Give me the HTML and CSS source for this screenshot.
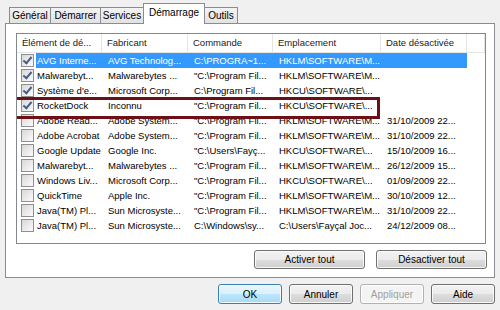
FILE: index.html
```html
<!DOCTYPE html>
<html lang="fr">
<head>
    <meta charset="UTF-8">
    <title>Configuration du système</title>
    <link rel="stylesheet" href="styles.css">
</head>
<body>
    <div class="dialog">
        <div class="tabs">
            <div class="tab t-general">Général</div>
            <div class="tab t-demarrer">Démarrer</div>
            <div class="tab t-services">Services</div>
            <div class="tab t-demarrage active">Démarrage</div>
            <div class="tab t-outils">Outils</div>
        </div>

        <div class="panel">
            <div class="list">
                <div class="list-header">
                    <div class="col">Élément de dé...</div>
                    <div class="col">Fabricant</div>
                    <div class="col">Commande</div>
                    <div class="col">Emplacement</div>
                    <div class="col">Date désactivée</div>
                    <div class="col"></div>
                </div>

                <div class="row selected">
                    <div class="cell first"><span class="check on"></span><span class="label">AVG Interne...</span></div>
                    <div class="cell">AVG Technolog...</div>
                    <div class="cell">C:\PROGRA~1...</div>
                    <div class="cell">HKLM\SOFTWARE\M...</div>
                    <div class="cell"></div>
                </div>
                <div class="row">
                    <div class="cell first"><span class="check on"></span><span class="label">Malwarebyt...</span></div>
                    <div class="cell">Malwarebytes ...</div>
                    <div class="cell">"C:\Program Fil...</div>
                    <div class="cell">HKLM\SOFTWARE\M...</div>
                    <div class="cell"></div>
                </div>
                <div class="row">
                    <div class="cell first"><span class="check on"></span><span class="label">Système d'e...</span></div>
                    <div class="cell">Microsoft Corp...</div>
                    <div class="cell">C:\Program Fil...</div>
                    <div class="cell">HKCU\SOFTWARE\...</div>
                    <div class="cell"></div>
                </div>
                <div class="row">
                    <div class="cell first"><span class="check on"></span><span class="label">RocketDock</span></div>
                    <div class="cell">Inconnu</div>
                    <div class="cell">"C:\Program Fil...</div>
                    <div class="cell">HKCU\SOFTWARE\...</div>
                    <div class="cell"></div>
                </div>
                <div class="row">
                    <div class="cell first"><span class="check"></span><span class="label">Adobe Read...</span></div>
                    <div class="cell">Adobe System...</div>
                    <div class="cell">"C:\Program Fil...</div>
                    <div class="cell">HKLM\SOFTWARE\M...</div>
                    <div class="cell">31/10/2009 22...</div>
                </div>
                <div class="row">
                    <div class="cell first"><span class="check"></span><span class="label">Adobe Acrobat</span></div>
                    <div class="cell">Adobe System...</div>
                    <div class="cell">"C:\Program Fil...</div>
                    <div class="cell">HKLM\SOFTWARE\M...</div>
                    <div class="cell">31/10/2009 22...</div>
                </div>
                <div class="row">
                    <div class="cell first"><span class="check"></span><span class="label">Google Update</span></div>
                    <div class="cell">Google Inc.</div>
                    <div class="cell">"C:\Users\Fayç...</div>
                    <div class="cell">HKCU\SOFTWARE\...</div>
                    <div class="cell">15/10/2009 16...</div>
                </div>
                <div class="row">
                    <div class="cell first"><span class="check"></span><span class="label">Malwarebyt...</span></div>
                    <div class="cell">Malwarebytes ...</div>
                    <div class="cell">"C:\Program Fil...</div>
                    <div class="cell">HKLM\SOFTWARE\M...</div>
                    <div class="cell">26/12/2009 15...</div>
                </div>
                <div class="row">
                    <div class="cell first"><span class="check"></span><span class="label">Windows Liv...</span></div>
                    <div class="cell">Microsoft Corp...</div>
                    <div class="cell">"C:\Program Fil...</div>
                    <div class="cell">HKCU\SOFTWARE\...</div>
                    <div class="cell">01/09/2009 22...</div>
                </div>
                <div class="row">
                    <div class="cell first"><span class="check"></span><span class="label">QuickTime</span></div>
                    <div class="cell">Apple Inc.</div>
                    <div class="cell">"C:\Program Fil...</div>
                    <div class="cell">HKLM\SOFTWARE\M...</div>
                    <div class="cell">30/10/2009 12...</div>
                </div>
                <div class="row">
                    <div class="cell first"><span class="check"></span><span class="label">Java(TM) Pl...</span></div>
                    <div class="cell">Sun Microsyste...</div>
                    <div class="cell">"C:\Program Fil...</div>
                    <div class="cell">HKLM\SOFTWARE\M...</div>
                    <div class="cell">31/10/2009 22...</div>
                </div>
                <div class="row">
                    <div class="cell first"><span class="check"></span><span class="label">Java(TM) Pl...</span></div>
                    <div class="cell">Sun Microsyste...</div>
                    <div class="cell">C:\Windows\sy...</div>
                    <div class="cell">C:\Users\Fayçal Joc...</div>
                    <div class="cell">24/12/2009 08...</div>
                </div>

                <!-- cadre rouge autour de RocketDock -->
                <div class="mark"></div>
            </div>

            <div class="list-actions">
                <button class="btn wide">Activer tout</button>
                <button class="btn wide">Désactiver tout</button>
            </div>
        </div>

        <div class="footer">
            <button class="btn default">OK</button>
            <button class="btn">Annuler</button>
            <button class="btn" disabled>Appliquer</button>
            <button class="btn">Aide</button>
        </div>
    </div>
</body>
</html>
```

FILE: styles.css
```css
body {
    margin: 0;
    background-color: #f0f0f0;
    font-family: "Liberation Sans", Arial, sans-serif;
    font-size: 9.5px;
    color: #000;
}

.dialog {
    width: 490px;
    padding: 4px 5px 0 5px;
}

/* Onglets */
.tabs {
    display: flex;
    align-items: flex-end;
    padding-left: 4px;
    height: 19px;
}

.tab {
    box-sizing: border-box;
    height: 16px;
    line-height: 15px;
    text-align: center;
    border: 1px solid #898c95;
    border-bottom: none;
    margin-right: -1px;
    background: linear-gradient(#f3f3f3, #e2e2e2);
    font-size: 10px;
    color: #000;
    position: relative;
}

.t-general { width: 42px; }
.t-demarrer { width: 51px; }
.t-services { width: 44px; }
.t-demarrage { width: 62px; }
.t-outils { width: 34px; }

.tab.active {
    height: 21px;
    line-height: 18px;
    background: #fff;
    margin-bottom: -1px;
    z-index: 1;
}

.panel {
    border: 1px solid #898c95;
    background: #fff;
    height: 244px;
    padding: 9px 8px 0 10px;
}

/* Liste */
.list {
    position: relative;
    border: 1px solid #828790;
    height: 209px;
    overflow: hidden;
}

.list-header,
.row {
    display: grid;
    grid-template-columns: 85px 86px 85px 108px 86px 1fr;
}

.list-header {
    height: 18px;
    line-height: 18px;
    border-bottom: 1px solid #e5e5e5;
}

.list-header .col {
    padding-left: 5px;
    border-right: 1px solid #e5e5e5;
    white-space: nowrap;
    overflow: hidden;
    color: #1a1a1a;
}

.row {
    height: 15px;
    line-height: 15px;
    grid-template-columns: 85px 86px 85px 108px 86px;
}

.cell {
    padding-left: 6px;
    white-space: nowrap;
    overflow: hidden;
}

.cell.first {
    display: flex;
    align-items: center;
    padding-left: 0;
}

.check {
    width: 11px;
    height: 11px;
    margin: 0 2px 0 4px;
    border: 1px solid #8f8f8f;
    background: linear-gradient(135deg, #d8d8d8, #fbfbfb);
    flex-shrink: 0;
    position: relative;
}

.check.on::after {
    content: "";
    position: absolute;
    left: 3px;
    top: 0px;
    width: 3px;
    height: 7px;
    border: solid #4a5d8a;
    border-width: 0 2px 2px 0;
    transform: rotate(40deg);
}

.label {
    flex: 1;
    padding-left: 1px;
    height: 15px;
    overflow: hidden;
}

.row.selected .label,
.row.selected .cell:not(.first) {
    background: #3399ff;
    color: #fff;
}

.mark {
    position: absolute;
    left: -3px;
    top: 63px;
    width: 360px;
    height: 16px;
    border: 3px solid #6d1016;
}

/* Boutons */
.list-actions {
    display: flex;
    justify-content: flex-end;
    gap: 11px;
    margin-top: 6px;
    margin-right: -1px;
}

.btn {
    font-family: "Liberation Sans", Arial, sans-serif;
    font-size: 10px;
    color: #000;
    width: 64px;
    height: 20px;
    padding: 0;
    border: 1px solid #707070;
    border-radius: 3px;
    background: linear-gradient(#f2f2f2 0%, #ebebeb 50%, #dddddd 51%, #cfcfcf 100%);
    box-shadow: inset 0 0 0 1px rgba(255, 255, 255, 0.8);
}

.btn.wide {
    width: 111px;
    height: 19px;
}

.btn.default {
    border-color: #3c7fb1;
    background: linear-gradient(#eaf6fd 0%, #d9f0fc 50%, #bee6fd 51%, #a7d9f5 100%);
}

.btn:disabled {
    color: #a0a0a0;
    border-color: #adb2b5;
    background: #f4f4f4;
}

.footer {
    display: flex;
    justify-content: flex-end;
    gap: 7px;
    margin-top: 6px;
}
```
